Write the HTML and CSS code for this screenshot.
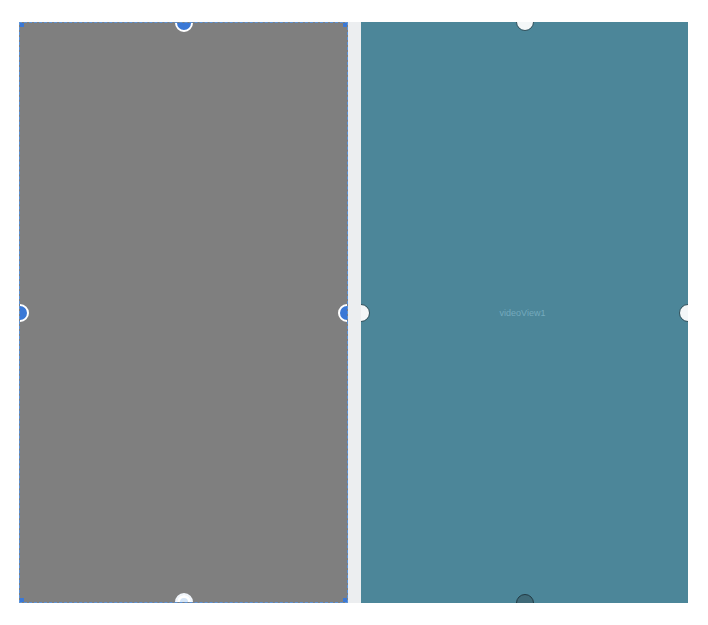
FILE: index.html
```html
<!DOCTYPE html>
<html lang="en">
<head>
    <meta charset="UTF-8">
    <title>Layout Preview</title>
    <link rel="stylesheet" href="styles.css">
</head>
<body>
    <div class="canvas">
        <div class="view view-selected">
            <span class="corner corner-tl"></span>
            <span class="corner corner-bl"></span>
            <span class="corner corner-tr"></span>
            <span class="corner corner-br"></span>
            <span class="handle handle-top blue"></span>
            <span class="handle handle-left blue"></span>
            <span class="handle handle-right blue"></span>
            <span class="handle handle-bottom ring"></span>
        </div>
        <div class="divider"></div>
        <div class="view view-video">
            <span class="handle handle-top light"></span>
            <span class="handle handle-left light"></span>
            <span class="handle handle-right light"></span>
            <span class="handle handle-bottom dark"></span>
            <span class="label">videoView1</span>
        </div>
    </div>
</body>
</html>
```

FILE: styles.css
```css
body {
    margin: 0;
    background-color: #ffffff;
    font-family: Arial, "Liberation Sans", sans-serif;
}
.canvas {
    display: flex;
    padding: 22px 0 0 19px;
    height: 581px;
}
.view {
    position: relative;
    overflow: hidden;
    height: 581px;
}
.view-selected {
    width: 327px;
    background-color: #7f7f7f;
    border: 1px dashed #5b93d9;
    height: 579px;
}
.divider {
    width: 13px;
    background-color: #eceef0;
}
.view-video {
    width: 327px;
    background-color: #4c8699;
    display: flex;
    align-items: center;
    justify-content: center;
}
.label {
    font-size: 9px;
    color: #74aabd;
    margin-right: 4px;
    margin-top: 1px;
}
.handle {
    position: absolute;
    width: 14px;
    height: 14px;
    border-radius: 50%;
    border: 2px solid #ffffff;
}
.handle-top {
    top: -9px;
    left: 50%;
    margin-left: -9px;
}
.handle-bottom {
    bottom: -9px;
    left: 50%;
    margin-left: -9px;
}
.handle-left {
    left: -9px;
    top: 50%;
    margin-top: -9px;
}
.handle-right {
    right: -9px;
    top: 50%;
    margin-top: -9px;
}
.blue {
    background-color: #3a78d6;
}
.ring {
    background-color: #d6e6f7;
    border-color: #f2f6fb;
    box-shadow: inset 0 0 0 3px #ffffff;
}
.light {
    background-color: #f4f7f8;
    border-color: #2f4f5a;
    border-width: 1px;
    width: 16px;
    height: 16px;
}
.dark {
    background-color: #3f6a78;
    border-color: #223a43;
    border-width: 1px;
    width: 16px;
    height: 16px;
}
.corner {
    position: absolute;
    width: 4px;
    height: 4px;
    background-color: #3a78d6;
}
.corner-tl { top: 0; left: 0; }
.corner-bl { bottom: 0; left: 0; }
.corner-tr { top: 0; right: 0; }
.corner-br { bottom: 0; right: 0; }
```
